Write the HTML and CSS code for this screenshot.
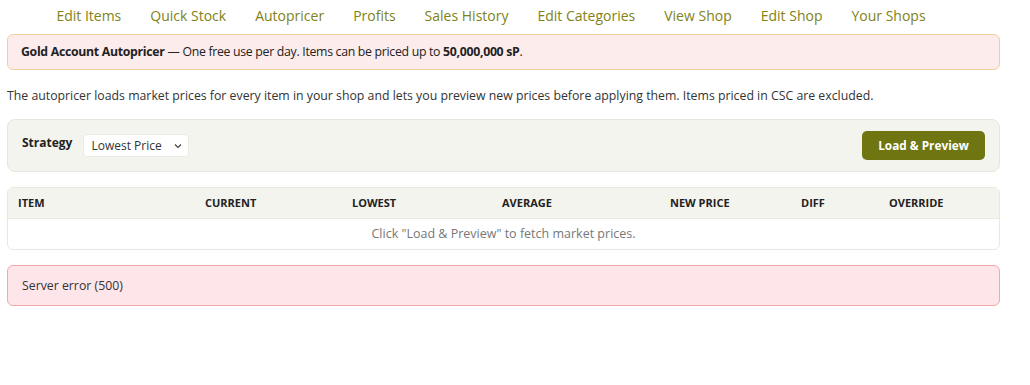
FILE: index.html
```html
<!DOCTYPE html>
<html lang="en">
<head>
<meta charset="utf-8">
<title>Autopricer</title>
<link rel="stylesheet" href="styles.css">
</head>
<body>
<div class="page">
  <nav class="nav">
    <a href="#">Edit Items</a>
    <a href="#">Quick Stock</a>
    <a href="#">Autopricer</a>
    <a href="#">Profits</a>
    <a href="#">Sales History</a>
    <a href="#">Edit Categories</a>
    <a href="#">View Shop</a>
    <a href="#">Edit Shop</a>
    <a href="#">Your Shops</a>
  </nav>

  <div class="notice"><b>Gold Account Autopricer</b> — One free use per day. Items can be priced up to <b>50,000,000 sP</b>.</div>

  <p class="desc">The autopricer loads market prices for every item in your shop and lets you preview new prices before applying them. Items priced in CSC are excluded.</p>

  <div class="panel">
    <div class="field">
      <label class="field-label" for="strategy">Strategy</label>
      <div class="select-wrap">
        <select id="strategy" class="select">
          <option>Lowest Price</option>
        </select>
        <svg class="chev" width="8" height="6" viewBox="0 0 8 6"><path d="M1 1.5 L4 4.5 L7 1.5" fill="none" stroke="#444" stroke-width="1.2"/></svg>
      </div>
    </div>
    <button class="btn">Load &amp; Preview</button>
  </div>

  <div class="table-box">
    <table class="tbl">
      <colgroup>
        <col style="width:187px"><col style="width:147px"><col style="width:150px"><col style="width:168px"><col style="width:131px"><col style="width:88px"><col>
      </colgroup>
      <thead>
        <tr><th>Item</th><th>Current</th><th>Lowest</th><th>Average</th><th>New Price</th><th>Diff</th><th>Override</th></tr>
      </thead>
      <tbody>
        <tr><td colspan="7" class="empty">Click "Load &amp; Preview" to fetch market prices.</td></tr>
      </tbody>
    </table>
  </div>

  <div class="error">Server error (500)</div>
</div>
</body>
</html>
```

FILE: styles.css
```css
* { box-sizing: border-box; }
html, body { margin: 0; padding: 0; background: #fff; }
body {
  font-family: "Open Sans", "Noto Sans", sans-serif;
  font-size: 12.3px;
  color: #333;
}
.page {
  width: 1007px;
  padding: 0 7px;
}
.nav {
  display: flex;
  justify-content: center;
  gap: 29px;
  padding: 6px 25px 6px 0;
  margin-bottom: 2px;
}
.nav a {
  color: #808218;
  text-decoration: none;
  font-size: 14px;
  line-height: 20px;
}
.notice {
  background: #fdecec;
  border: 1px solid #f3cf9f;
  border-radius: 6px;
  padding: 9px 13px;
  line-height: 16px;
  color: #222;
  letter-spacing: -0.3px;
}
.notice b { font-weight: 700; }
.desc {
  margin: 17px 0 14px;
  line-height: 18px;
  color: #333;
}
.panel {
  display: flex;
  align-items: center;
  justify-content: space-between;
  background: #f4f4ee;
  border: 1px solid #e6e6de;
  border-radius: 8px;
  padding: 11px 14px 11px 14px;
}
.field {
  display: flex;
  align-items: center;
  gap: 11px;
}
.field-label {
  font-weight: 700;
  font-size: 12px;
  color: #222;
  padding-bottom: 7px;
}
.select-wrap {
  position: relative;
}
.select {
  appearance: none;
  -webkit-appearance: none;
  width: 106px;
  height: 23px;
  border: 1px solid #ebebe5;
  border-radius: 4px;
  background: #fff;
  font-family: inherit;
  font-size: 12px;
  color: #333;
  padding: 0 20px 0 7px;
}
.chev {
  position: absolute;
  right: 7px;
  top: 9px;
  pointer-events: none;
}
.btn {
  background: #6e7511;
  color: #fff;
  border: none;
  border-radius: 5px;
  width: 123px;
  height: 29px;
  padding: 0 0 2px;
  font-family: inherit;
  font-weight: 700;
  font-size: 11.8px;
}
.table-box {
  margin-top: 15px;
  border: 1px solid #e8e8e2;
  border-radius: 6px;
  overflow: hidden;
}
.tbl {
  width: 100%;
  border-collapse: collapse;
  table-layout: fixed;
}
.tbl th {
  background: #f4f4ee;
  text-align: left;
  font-size: 11px;
  font-weight: 700;
  text-transform: uppercase;
  color: #222;
  height: 30px;
  padding: 0 10px;
  border-bottom: 1px solid #e8e8e2;
}
.tbl td.empty {
  text-align: center;
  color: #777;
  height: 31px;
  padding: 0;
  font-size: 12.5px;
}
.error {
  margin-top: 15px;
  background: #fde5ea;
  border: 1px solid #f4a7ab;
  border-radius: 6px;
  padding: 12px 14px 11px;
  line-height: 16px;
  color: #333;
}
```
